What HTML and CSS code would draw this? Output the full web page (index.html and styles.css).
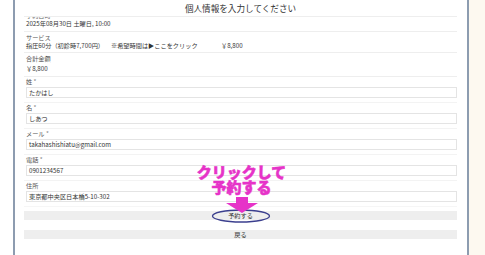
FILE: index.html
```html
<!DOCTYPE html>
<html lang="ja">
<head>
<meta charset="utf-8">
<link rel="stylesheet" href="styles.css">
</head>
<body>
<div class="page">
  <div class="gutter-left"></div>
  <div class="panel">
    <div class="title">個人情報を入力してください</div>
    <div class="cut-label"><span>予約日時</span></div>
    <div class="row first">
      <div class="value">2025年08月30日 土曜日, 10:00</div>
    </div>
    <div class="row second">
      <div class="label">サービス</div>
      <div class="value service">
        <span class="svc">指圧60分（初診時7,700円）</span>
        <span class="note">※希望時間は▶ここをクリック</span>
        <span class="price">￥8,800</span>
      </div>
    </div>
    <div class="row third">
      <div class="label">合計金額</div>
      <div class="value total">￥8,800</div>
    </div>
    <div class="field">
      <div class="label">姓 <span class="req">*</span></div>
      <div class="input">たかはし</div>
    </div>
    <div class="field">
      <div class="label">名 <span class="req">*</span></div>
      <div class="input">しあつ</div>
    </div>
    <div class="field">
      <div class="label">メール <span class="req">*</span></div>
      <div class="input">takahashishiatu@gmail.com</div>
    </div>
    <div class="field">
      <div class="label">電話 <span class="req">*</span></div>
      <div class="input">0901234567</div>
    </div>
    <div class="field last">
      <div class="label">住所</div>
      <div class="input">東京都中央区日本橋5-10-302</div>
    </div>
    <div class="actions">
      <div class="btn submit">予約する
        <svg class="ring" width="62" height="16" viewBox="0 0 62 16"><ellipse cx="31" cy="8" rx="28.5" ry="6" fill="none" stroke="#3b3f8e" stroke-width="1.3"/></svg>
        <div class="callout">
          <div class="callout-text">クリックして<br>予約する</div>
          <svg class="arrow" width="32" height="16" viewBox="0 0 32 16"><path d="M10 0 H22 V6 H32 L16 16 L0 6 H10 Z" fill="#e633c8"/></svg>
        </div>
      </div>
      <div class="btn back">戻る</div>
    </div>
  </div>
  <div class="gutter-right"></div>
</div>
</body>
</html>
```

FILE: styles.css
```css
html, body {
  margin: 0;
  padding: 0;
  height: 255px;
  overflow: hidden;
  background: #ffffff;
  font-family: "Noto Sans CJK JP", "Noto Sans", sans-serif;
  color: #333;
}
.page {
  display: flex;
  height: 255px;
}
.gutter-left {
  width: 13px;
  flex: none;
  background: #ffffff;
}
.gutter-right {
  flex: 1;
  background: #fdf9f0;
}
.panel {
  flex: none;
  width: 433px;
  border-left: 2px solid #8d9cb0;
  border-right: 2px solid #8d9cb0;
  background: #fff;
  padding: 0 10px 0 9px;
}
.title {
  text-align: center;
  font-size: 8.6px;
  line-height: 16px;
  height: 16px;
  color: #333;
  border-bottom: 1px solid #eeeeee;
}
.cut-label {
  height: 3px;
  overflow: hidden;
  display: flex;
  align-items: flex-end;
  font-size: 6.2px;
  color: #666;
  padding-left: 2px;
}
.cut-label span {
  display: block;
  line-height: 8px;
}
.row {
  border-bottom: 1px solid #eeeeee;
  padding: 2px 2px 2px 2px;
}
.row.first {
  padding-top: 0;
  padding-bottom: 3px;
}
.row.third {
  padding-bottom: 3px;
}
.label {
  font-size: 6.2px;
  line-height: 8px;
  height: 8px;
  color: #555;
}
.req {
  color: #888;
}
.value {
  font-size: 6.2px;
  line-height: 8px;
  height: 8px;
  color: #333;
}
.total {
  margin-top: 2px;
}
.service {
  display: flex;
  white-space: nowrap;
}
.service .svc {
  width: 85px;
}
.service .note {
  width: 110px;
}
.field {
  padding: 1px 0 4px 2px;
  border-bottom: 1px solid #f3f3f3;
}
.field.last {
  border-bottom-color: #f6f6f6;
}
.field .label {
  margin-bottom: 1px;
}
.input {
  border: 1px solid #e4e4e4;
  background: #fff;
  font-size: 6.2px;
  line-height: 9px;
  height: 9px;
  padding: 0 2px;
  color: #333;
}
.actions {
  display: flex;
  flex-direction: column;
  gap: 10px;
  margin-top: 4px;
}
.btn {
  background: #eeeeee;
  height: 9px;
  line-height: 9px;
  font-size: 6.2px;
  text-align: center;
  color: #333;
}
.submit {
  position: relative;
}
.ring {
  position: absolute;
  left: 50%;
  top: 50%;
  margin-left: -31px;
  margin-top: -8px;
}
.callout {
  position: absolute;
  left: 50%;
  bottom: 7px;
  width: 120px;
  margin-left: -59px;
  display: flex;
  flex-direction: column;
  align-items: center;
}
.callout-text {
  font-size: 15px;
  line-height: 15px;
  font-weight: 900;
  color: #e633c8;
  text-align: center;
  -webkit-text-stroke: 0.5px #e633c8;
}
.arrow {
  margin-top: 3px;
}
```
